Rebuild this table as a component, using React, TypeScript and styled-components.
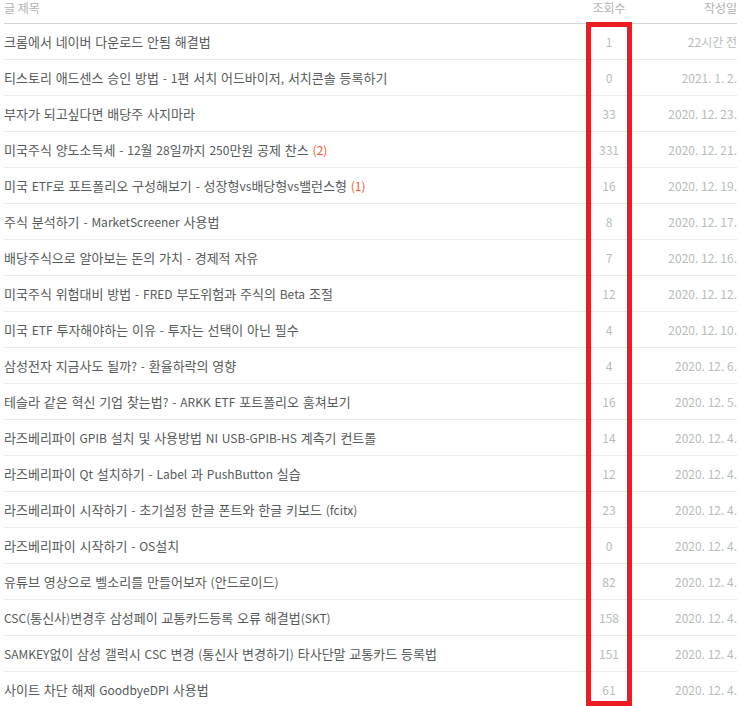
import React from 'react';
import styled, { createGlobalStyle } from 'styled-components';

const GlobalStyle = createGlobalStyle`
  html, body {
    margin: 0;
    padding: 0;
    background: #fff;
  }
  body {
    font-family: "Noto Sans CJK KR", "Noto Sans", sans-serif;
  }
`;

interface Post {
  title: string;
  comments?: number;
  views: number;
  date: string;
}

const POSTS: Post[] = [
  { title: '크롬에서 네이버 다운로드 안됨 해결법', views: 1, date: '22시간 전' },
  { title: '티스토리 애드센스 승인 방법 - 1편 서치 어드바이저, 서치콘솔 등록하기', views: 0, date: '2021. 1. 2.' },
  { title: '부자가 되고싶다면 배당주 사지마라', views: 33, date: '2020. 12. 23.' },
  { title: '미국주식 양도소득세 - 12월 28일까지 250만원 공제 찬스', comments: 2, views: 331, date: '2020. 12. 21.' },
  { title: '미국 ETF로 포트폴리오 구성해보기 - 성장형vs배당형vs밸런스형', comments: 1, views: 16, date: '2020. 12. 19.' },
  { title: '주식 분석하기 - MarketScreener 사용법', views: 8, date: '2020. 12. 17.' },
  { title: '배당주식으로 알아보는 돈의 가치 - 경제적 자유', views: 7, date: '2020. 12. 16.' },
  { title: '미국주식 위험대비 방법 - FRED 부도위험과 주식의 Beta 조절', views: 12, date: '2020. 12. 12.' },
  { title: '미국 ETF 투자해야하는 이유 - 투자는 선택이 아닌 필수', views: 4, date: '2020. 12. 10.' },
  { title: '삼성전자 지금사도 될까? - 환율하락의 영향', views: 4, date: '2020. 12. 6.' },
  { title: '테슬라 같은 혁신 기업 찾는법? - ARKK ETF 포트폴리오 훔쳐보기', views: 16, date: '2020. 12. 5.' },
  { title: '라즈베리파이 GPIB 설치 및 사용방법 NI USB-GPIB-HS 계측기 컨트롤', views: 14, date: '2020. 12. 4.' },
  { title: '라즈베리파이 Qt 설치하기 - Label 과 PushButton 실습', views: 12, date: '2020. 12. 4.' },
  { title: '라즈베리파이 시작하기 - 초기설정 한글 폰트와 한글 키보드 (fcitx)', views: 23, date: '2020. 12. 4.' },
  { title: '라즈베리파이 시작하기 - OS설치', views: 0, date: '2020. 12. 4.' },
  { title: '유튜브 영상으로 벨소리를 만들어보자 (안드로이드)', views: 82, date: '2020. 12. 4.' },
  { title: 'CSC(통신사)변경후 삼성페이 교통카드등록 오류 해결법(SKT)', views: 158, date: '2020. 12. 4.' },
  { title: 'SAMKEY없이 삼성 갤럭시 CSC 변경 (통신사 변경하기) 타사단말 교통카드 등록법', views: 151, date: '2020. 12. 4.' },
  { title: '사이트 차단 해제 GoodbyeDPI 사용법', views: 61, date: '2020. 12. 4.' },
];

// --- Styled Components ---

const Page = styled.div`
  position: relative;
  width: 746px;
  height: 706px;
  overflow: hidden;
  padding-left: 4px;
  box-sizing: border-box;
`;

const Table = styled.div`
  width: 733px;
  font-size: 12px;
`;

const Row = styled.div`
  display: grid;
  grid-template-columns: 1fr 46px 105px;
  align-items: center;
  height: 35px;
  border-bottom: 1px solid #ebebeb;
`;

const HeadRow = styled(Row)`
  align-items: start;
  height: 23px;
  line-height: 16px;
  color: #b2b2b2;
  border-bottom-color: #d4d4d4;
`;

const HeadCell = styled.span<{ $align: 'left' | 'center' | 'right' }>`
  text-align: ${(p) => p.$align};
`;

const Title = styled.span`
  font-size: 13px;
  word-spacing: 0.9px;
  color: #555b59;
  white-space: nowrap;
  overflow: hidden;
`;

// latin runs render a bit smaller than hangul, like the original font
const Latin = styled.span`
  font-size: 12px;
  word-spacing: 0;
`;

const Comments = styled.span`
  font-size: 12px;
  color: #f4582f;
`;

const Views = styled.span`
  color: #b5bdb9;
  text-align: center;
`;

const DateCell = styled.span`
  color: #b5bdb9;
  text-align: right;
`;

const Highlight = styled.div`
  position: absolute;
  left: 586px;
  top: 22px;
  width: 46px;
  height: 684px;
  border: 5px solid #ec1c24;
  box-sizing: border-box;
  pointer-events: none;
`;

function splitRuns(text: string) {
  return text
    .split(/([A-Za-z0-9().,?\-]+)/)
    .map((part, i) => (i % 2 ? <Latin key={i}>{part}</Latin> : part));
}

export default function App() {
  return (
    <>
      <GlobalStyle />
      <Page>
        <Table>
          <HeadRow>
            <HeadCell $align="left">글 제목</HeadCell>
            <HeadCell $align="center">조회수</HeadCell>
            <HeadCell $align="right">작성일</HeadCell>
          </HeadRow>
          {POSTS.map((post) => (
            <Row key={post.title}>
              <Title>
                {splitRuns(post.title)}
                {post.comments ? <> <Comments>({post.comments})</Comments></> : null}
              </Title>
              <Views>{post.views}</Views>
              <DateCell>{post.date}</DateCell>
            </Row>
          ))}
        </Table>
        <Highlight />
      </Page>
    </>
  );
}
